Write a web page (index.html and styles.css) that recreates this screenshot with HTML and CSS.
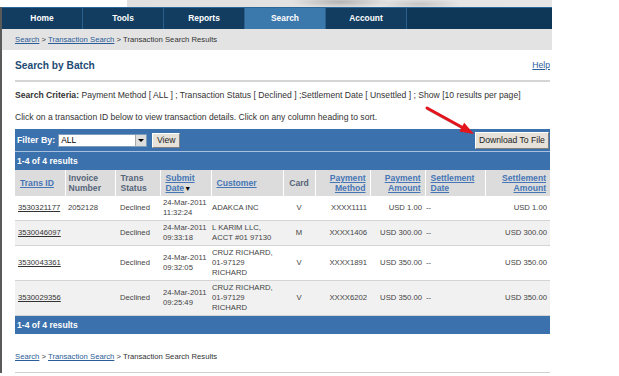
FILE: index.html
```html
<!DOCTYPE html>
<html lang="en">

<head>
    <meta charset="UTF-8">
    <title>Transaction Search Results</title>
    <link rel="stylesheet" href="styles.css">
</head>

<body>
    <div class="banner"></div>

    <div id="page">
        <ul class="nav">
            <li>Home</li>
            <li>Tools</li>
            <li>Reports</li>
            <li class="active">Search</li>
            <li>Account</li>
        </ul>

        <div class="crumbs"><a href="#">Search</a> &gt; <a href="#">Transaction Search</a> &gt; Transaction Search Results</div>

        <div class="content">
            <div class="page-head">
                <h1>Search by Batch</h1>
                <a href="#">Help</a>
            </div>

            <p class="criteria"><b>Search Criteria:</b> Payment Method [ ALL ] ; Transaction Status [ Declined ] ;Settlement Date [ Unsettled ] ; Show [10 results per page]</p>
            <p class="hint">Click on a transaction ID below to view transaction details. Click on any column heading to sort.</p>

            <div class="filter-bar">
                <span class="filter-label">Filter By:</span>
                <div class="select"><span>ALL</span><span class="select-btn"></span></div>
                <button class="btn view-btn">View</button>
                <button class="btn download-btn">Download To File</button>
            </div>
            <div class="results-bar">1-4 of 4 results</div>

            <table>
                <colgroup>
                    <col style="width:50px">
                    <col style="width:50px">
                    <col style="width:45px">
                    <col style="width:51px">
                    <col style="width:72px">
                    <col style="width:32px">
                    <col style="width:55px">
                    <col style="width:55px">
                    <col style="width:60px">
                    <col style="width:65px">
                </colgroup>
                <thead>
                    <tr>
                        <th><a href="#">Trans ID</a></th>
                        <th>Invoice<br>Number</th>
                        <th class="pad">Trans<br>Status</th>
                        <th class="pad"><a href="#">Submit<br>Date</a><span class="sort">&#9660;</span></th>
                        <th class="pad"><a href="#">Customer</a></th>
                        <th class="center">Card</th>
                        <th class="right"><a href="#">Payment<br>Method</a></th>
                        <th class="right"><a href="#">Payment<br>Amount</a></th>
                        <th class="pad"><a href="#">Settlement<br>Date</a></th>
                        <th class="right"><a href="#">Settlement<br>Amount</a></th>
                    </tr>
                </thead>
                <tbody>
                    <tr>
                        <td><a href="#">3530321177</a></td>
                        <td>2052128</td>
                        <td class="pad">Declined</td>
                        <td>24-Mar-2011<br>11:32:24</td>
                        <td class="tight">ADAKCA INC</td>
                        <td class="center">V</td>
                        <td class="right">XXXX1111</td>
                        <td class="right">USD 1.00</td>
                        <td class="tight">--</td>
                        <td class="right">USD 1.00</td>
                    </tr>
                    <tr class="alt">
                        <td><a href="#">3530046097</a></td>
                        <td></td>
                        <td class="pad">Declined</td>
                        <td>24-Mar-2011<br>09:33:18</td>
                        <td class="tight">L KARIM LLC,<br>ACCT #01 97130</td>
                        <td class="center">M</td>
                        <td class="right">XXXX1406</td>
                        <td class="right">USD 300.00</td>
                        <td class="tight">--</td>
                        <td class="right">USD 300.00</td>
                    </tr>
                    <tr>
                        <td><a href="#">3530043361</a></td>
                        <td></td>
                        <td class="pad">Declined</td>
                        <td>24-Mar-2011<br>09:32:05</td>
                        <td class="tight">CRUZ RICHARD,<br>01-97129<br>RICHARD</td>
                        <td class="center">V</td>
                        <td class="right">XXXX1891</td>
                        <td class="right">USD 350.00</td>
                        <td class="tight">--</td>
                        <td class="right">USD 350.00</td>
                    </tr>
                    <tr class="alt">
                        <td><a href="#">3530029356</a></td>
                        <td></td>
                        <td class="pad">Declined</td>
                        <td>24-Mar-2011<br>09:25:49</td>
                        <td class="tight">CRUZ RICHARD,<br>01-97129<br>RICHARD</td>
                        <td class="center">V</td>
                        <td class="right">XXXX6202</td>
                        <td class="right">USD 350.00</td>
                        <td class="tight">--</td>
                        <td class="right">USD 350.00</td>
                    </tr>
                </tbody>
            </table>
            <div class="results-bar">1-4 of 4 results</div>

            <div class="crumbs bottom"><a href="#">Search</a> &gt; <a href="#">Transaction Search</a> &gt; Transaction Search Results</div>
        </div>

        <!-- red pointer drawn on top of the screenshot -->
        <svg class="arrow" width="60" height="40" viewBox="0 0 60 40">
            <line x1="8" y1="9" x2="43" y2="28.2" stroke="#b8b8b8" stroke-width="3" stroke-linecap="round" />
            <line x1="7" y1="8" x2="42" y2="27.2" stroke="#e3141c" stroke-width="3" stroke-linecap="round" />
            <polygon points="54,34 39.3,31.6 44.2,22.8" fill="#e3141c" />
        </svg>
    </div>
</body>

</html>
```

FILE: styles.css
```css
body {
    margin: 0;
    font-family: "Liberation Sans", Arial, sans-serif;
    font-size: 7.7px;
    color: #333;
    background-color: #fff;
}

a {
    color: #2b5d98;
}

.banner {
    width: 552px;
    height: 7px;
    background:
        radial-gradient(ellipse 70px 9px at 340px 2px, #b5b5b5, rgba(200, 200, 200, 0) 70%),
        radial-gradient(ellipse 60px 8px at 420px 4px, #c6c6c6, rgba(200, 200, 200, 0) 70%),
        linear-gradient(to right, #fff 0, #fff 127px, #e0e0e0 127px, #e6e6e6 100%);
}

#page {
    position: relative;
    width: 550px;
    border-left: 2px solid #5a5a5a;
}

.nav {
    display: flex;
    margin: 0;
    padding: 0;
    list-style: none;
    height: 22px;
    box-sizing: border-box;
    background-color: #0e3657;
    border-top: 1px solid #2c679a;
}

.nav li {
    width: 80px;
    border-right: 1px solid #2a5f8e;
    background-color: #123d61;
    color: #fff;
    font-weight: bold;
    font-size: 8.4px;
    line-height: 21px;
    text-align: center;
}

.nav li.active {
    background-color: #3b78ab;
}

.crumbs {
    height: 21px;
    line-height: 21px;
    padding-left: 13px;
    background-color: #e3e3e3;
}

.content {
    padding: 0 2px 0 13px;
}

.page-head {
    display: flex;
    justify-content: space-between;
    align-items: center;
    height: 30px;
    border-bottom: 2px solid #d5d5d5;
    font-size: 8.6px;
}

.page-head h1 {
    margin: 0;
    font-size: 10.2px;
    color: #1e4b74;
}

.criteria,
.hint {
    margin: 8px 0 0;
    font-size: 8.6px;
    line-height: 10px;
}

.hint {
    margin-top: 12px;
}

.filter-bar {
    display: flex;
    align-items: center;
    height: 22px;
    margin-top: 7px;
    padding: 0 1px 0 2px;
    background-color: #3b71ac;
    border-bottom: 1px solid #a9c1de;
}

.filter-label {
    color: #fff;
    font-weight: bold;
    font-size: 8.8px;
}

.select {
    display: flex;
    justify-content: space-between;
    align-items: stretch;
    width: 89px;
    height: 13px;
    margin-left: 3px;
    box-sizing: border-box;
    background-color: #fff;
    border: 1px solid #7f9db9;
    color: #000;
    font-size: 8.4px;
    line-height: 11px;
    padding-left: 2px;
}

.select-btn {
    position: relative;
    width: 10px;
    background-color: #dcdcdc;
    border-left: 1px solid #aaa;
}

.select-btn::after {
    content: "";
    position: absolute;
    left: 2px;
    top: 4px;
    border-left: 3px solid transparent;
    border-right: 3px solid transparent;
    border-top: 3px solid #000;
}

.btn {
    padding: 0 2px;
    font-family: "Liberation Sans", Arial, sans-serif;
    font-size: 8.6px;
    color: #222;
    background-color: #e6e2da;
    border: 1px solid;
    border-color: #fff #808080 #808080 #fff;
    box-sizing: border-box;
}

.view-btn {
    width: 28px;
    height: 15px;
    margin-left: 5px;
}

.download-btn {
    width: 74px;
    height: 17px;
    margin-left: auto;
}

.results-bar {
    height: 18px;
    line-height: 18px;
    padding-left: 2px;
    background-color: #3b71ac;
    color: #fff;
    font-weight: bold;
    font-size: 8.6px;
}

table {
    width: 535px;
    border-collapse: collapse;
    table-layout: fixed;
}

th {
    height: 26px;
    padding: 0 3px;
    background-color: #dcdcdc;
    border-left: 1px solid #fff;
    color: #56657a;
    font-size: 8.6px;
    font-weight: bold;
    line-height: 10px;
    text-align: left;
    vertical-align: middle;
}

th:first-child {
    border-left: none;
    padding-left: 5px;
}

th a {
    color: #4676b5;
}

.sort {
    color: #000;
    font-size: 7px;
}

td {
    padding: 2px 3px;
    line-height: 10px;
    color: #444;
    border-bottom: 1px solid #d4d4d4;
    vertical-align: middle;
}

td a {
    color: #333;
}

tr.alt td {
    background-color: #f1f1f1;
}

th.pad,
td.pad {
    padding-left: 5px;
}

td.tight {
    padding-left: 1px;
}

.center {
    text-align: center;
}

th.right {
    text-align: right;
    padding-right: 4px;
}

td.right {
    text-align: right;
    padding-right: 3px;
}

.crumbs.bottom {
    height: auto;
    margin-top: 18px;
    padding: 0 0 10px;
    line-height: 10px;
    background: none;
    border-bottom: 1px solid #d0d0d0;
}

.arrow {
    position: absolute;
    left: 418px;
    top: 93px;
}
```
